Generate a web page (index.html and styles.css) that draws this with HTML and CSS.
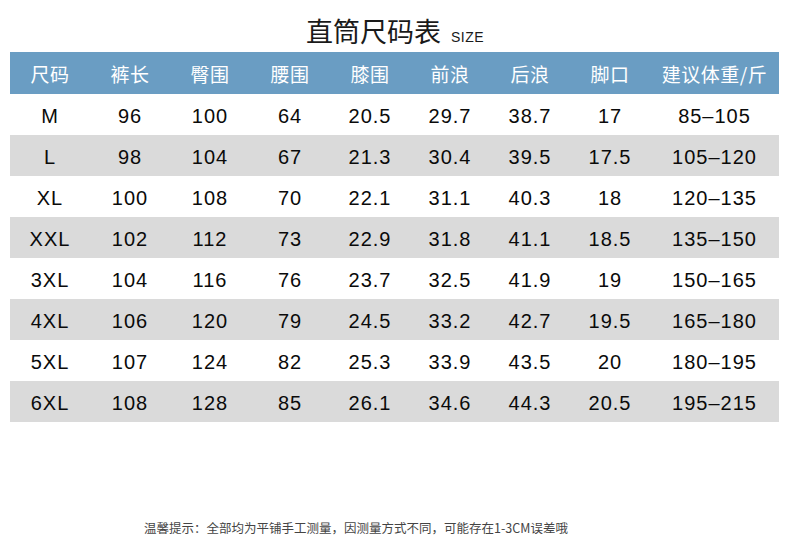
FILE: index.html
```html
<!DOCTYPE html>
<html lang="zh-CN">
<head>
<meta charset="utf-8">
<title>直筒尺码表</title>
<link rel="stylesheet" href="styles.css">
</head>
<body>
<div class="page">
  <h1 class="title">直筒尺码表<span class="sub">SIZE</span></h1>
  <div class="table">
    <div class="row head">
      <div>尺码</div><div>裤长</div><div>臀围</div><div>腰围</div><div>膝围</div><div>前浪</div><div>后浪</div><div>脚口</div><div>建议体重/斤</div>
    </div>
    <div class="row">
      <div>M</div><div>96</div><div>100</div><div>64</div><div>20.5</div><div>29.7</div><div>38.7</div><div>17</div><div>85–105</div>
    </div>
    <div class="row alt">
      <div>L</div><div>98</div><div>104</div><div>67</div><div>21.3</div><div>30.4</div><div>39.5</div><div>17.5</div><div>105–120</div>
    </div>
    <div class="row">
      <div>XL</div><div>100</div><div>108</div><div>70</div><div>22.1</div><div>31.1</div><div>40.3</div><div>18</div><div>120–135</div>
    </div>
    <div class="row alt">
      <div>XXL</div><div>102</div><div>112</div><div>73</div><div>22.9</div><div>31.8</div><div>41.1</div><div>18.5</div><div>135–150</div>
    </div>
    <div class="row">
      <div>3XL</div><div>104</div><div>116</div><div>76</div><div>23.7</div><div>32.5</div><div>41.9</div><div>19</div><div>150–165</div>
    </div>
    <div class="row alt">
      <div>4XL</div><div>106</div><div>120</div><div>79</div><div>24.5</div><div>33.2</div><div>42.7</div><div>19.5</div><div>165–180</div>
    </div>
    <div class="row">
      <div>5XL</div><div>107</div><div>124</div><div>82</div><div>25.3</div><div>33.9</div><div>43.5</div><div>20</div><div>180–195</div>
    </div>
    <div class="row alt">
      <div>6XL</div><div>108</div><div>128</div><div>85</div><div>26.1</div><div>34.6</div><div>44.3</div><div>20.5</div><div>195–215</div>
    </div>
  </div>
  <p class="note">温馨提示：全部均为平铺手工测量，因测量方式不同，可能存在1-3CM误差哦</p>
</div>
</body>
</html>
```
FILE: styles.css
```css
html, body {
  margin: 0;
  padding: 0;
  background: #ffffff;
}
.page {
  width: 790px;
  height: 548px;
  display: flex;
  flex-direction: column;
  font-family: "Liberation Sans", "Noto Sans CJK SC", sans-serif;
  color: #0a0a0a;
}
.title {
  margin: 0;
  padding-top: 15px;
  height: 37px;
  box-sizing: content-box;
  text-align: center;
  font-family: "Noto Sans CJK SC", sans-serif;
  font-weight: 400;
  font-size: 27px;
  line-height: 32px;
  color: #1a1a1a;
}
.title .sub {
  font-family: "Liberation Sans", sans-serif;
  font-size: 14px;
  margin-left: 10px;
  letter-spacing: 0.5px;
}
.table {
  margin-left: 10px;
  width: 769px;
  display: flex;
  flex-direction: column;
}
.row {
  display: grid;
  grid-template-columns: repeat(8, 80px) 129px;
  height: 41px;
  box-sizing: border-box;
  padding-top: 3px;
  align-items: center;
  font-size: 20px;
  letter-spacing: 1px;
}
.row > div {
  text-align: center;
}
.row.head {
  height: 42px;
  padding-top: 0;
  background: #6a9dc3;
  color: #ffffff;
  font-family: "Noto Sans CJK SC", sans-serif;
  font-size: 19px;
  letter-spacing: 0.5px;
}
.row.alt {
  background: #dadada;
}
.note {
  margin: 98px 0 0 0;
  text-align: center;
  font-family: "Noto Sans CJK SC", sans-serif;
  font-size: 12.5px;
  line-height: 16px;
  color: #444444;
  padding-right: 78px;
}
```
